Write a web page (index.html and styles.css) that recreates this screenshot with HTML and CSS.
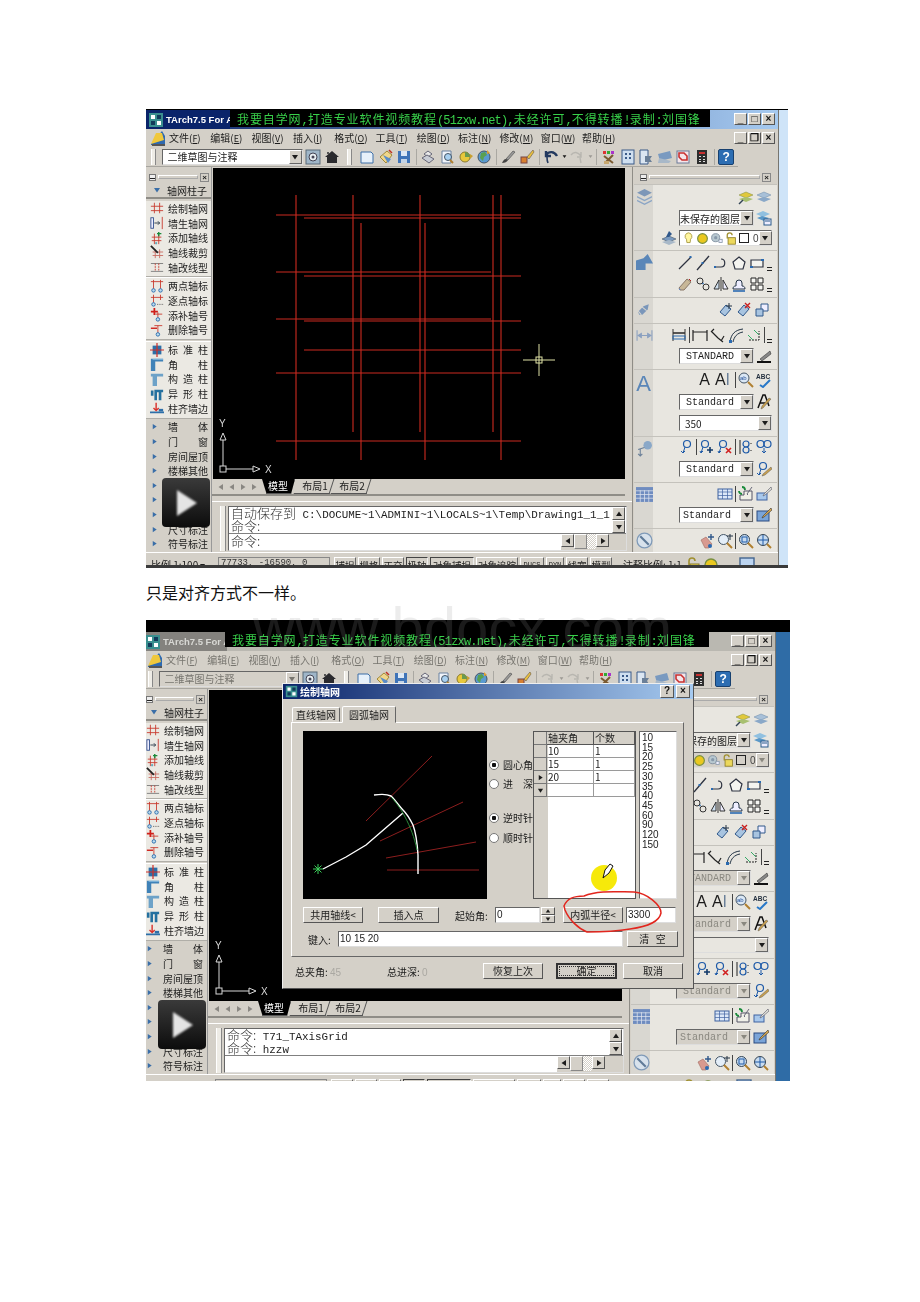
FILE: index.html
```html
<!DOCTYPE html>
<html lang="zh-CN">
<head>
    <meta charset="UTF-8">
    <title>只是对齐方式不一样</title>
    <link rel="stylesheet" href="styles.css">
</head>
<body>
<svg class="sprite" xmlns="http://www.w3.org/2000/svg">
    <symbol id="i-app" viewBox="0 0 16 16"><rect x="1" y="1" width="14" height="14" fill="#3a8f8f"/><path d="M3 3h4v4H3zM9 9h4v4H9z" fill="#fff"/><path d="M9 3h4v4H9zM3 9h4v4H3z" fill="#123a5a"/></symbol>
    <symbol id="i-doc" viewBox="0 0 16 16"><path d="M1 14 12 1l3 5v9H1z" fill="#2f6ab0"/><path d="M1 14 6 3h6l2 7z" fill="#f0c83c"/><path d="M2 14h13v2H2z" fill="#555"/></symbol>
    <symbol id="i-gear" viewBox="0 0 16 16"><rect x="1" y="1" width="14" height="14" fill="#9fb6c9" stroke="#5a6a78"/><circle cx="8" cy="8" r="4" fill="#e8eef2" stroke="#445"/><circle cx="8" cy="8" r="1.5" fill="#445"/></symbol>
    <symbol id="i-house" viewBox="0 0 16 16"><path d="M8 2 15 8h-2v6H3V8H1z" fill="#2a2a2e"/><path d="M3 3h2v2H3z" fill="#555"/></symbol>
    <symbol id="i-new" viewBox="0 0 16 16"><path d="M2 3h10l2 2v9H2z" fill="#e6f0fa" stroke="#3d6fa8"/></symbol>
    <symbol id="i-open" viewBox="0 0 16 16"><path d="M2 8 9 2l5 4-6 8z" fill="#f0d68a" stroke="#a08838"/><path d="M5 6l5 8 3-4z" fill="#5a8cc8"/><path d="M11 1l3 3" stroke="#c03020" stroke-width="1.5"/></symbol>
    <symbol id="i-save" viewBox="0 0 16 16"><rect x="2" y="2" width="12" height="12" fill="#3f74b8"/><rect x="5" y="2" width="6" height="5" fill="#dce8f5"/><rect x="5" y="10" width="6" height="4" fill="#c4d4e6"/></symbol>
    <symbol id="i-print" viewBox="0 0 16 16"><path d="M4 5 8 2l4 3-4 3z" fill="#e8e8e8" stroke="#667"/><path d="M2 9l5-3 7 4-5 4z" fill="#c8ccd4" stroke="#667"/></symbol>
    <symbol id="i-preview" viewBox="0 0 16 16"><path d="M3 2h9v12H3z" fill="#f0f4fa" stroke="#6a82a0"/><circle cx="9" cy="8" r="3.5" fill="#a8d0f0" stroke="#456"/><path d="M11 11l3 3" stroke="#b08030" stroke-width="2"/></symbol>
    <symbol id="i-publish" viewBox="0 0 16 16"><circle cx="7" cy="8" r="5" fill="#e8c83c" stroke="#8a7a30"/><path d="M7 3a5 5 0 0 1 5 5H7z" fill="#6a9a50"/><path d="M12 5l3 2-3 3z" fill="#c8a030"/></symbol>
    <symbol id="i-globe" viewBox="0 0 16 16"><circle cx="8" cy="8" r="6" fill="#5a9ad0" stroke="#456"/><path d="M5 4l4-1 2 3-3 2-1 4-3-3z" fill="#5aa050"/><path d="M11 1l3 3-3 1z" fill="#e0a030"/></symbol>
    <symbol id="i-brush" viewBox="0 0 16 16"><path d="M13 2 6 10l2 1 7-8z" fill="#9a9a9a" stroke="#444" stroke-width=".6"/><path d="M6 10c-2 0-3 2-4 4 3 0 5-1 6-3z" fill="#444"/></symbol>
    <symbol id="i-match" viewBox="0 0 16 16"><rect x="2" y="8" width="6" height="6" fill="#d88030" stroke="#744"/><path d="M14 1 8 8l2 2 5-7z" fill="#e8c040" stroke="#654" stroke-width=".6"/></symbol>
    <symbol id="i-undo" viewBox="0 0 16 16"><path d="M14 7C11 2 6 2 3 6M3 2v5h5" fill="none" stroke="#23395f" stroke-width="2.4"/><path d="M4 8c0 3 0 4 1 6" stroke="#23395f" stroke-width="1.6" fill="none"/></symbol>
    <symbol id="i-redo" viewBox="0 0 16 16"><path d="M2 6c3-4 7-3 10 1M12 3v5H8M11 9l1 5" fill="none" stroke="#b8b6b0" stroke-width="1.4"/></symbol>
    <symbol id="i-tricolor" viewBox="0 0 16 16"><path d="M2 2h3v3H2z" fill="#d33"/><path d="M6 2h3v3H6z" fill="#3a3"/><path d="M10 2h3v3h-3z" fill="#a3c"/><path d="M3 7l9 7M12 6l-8 8" stroke="#7a5a30" stroke-width="2"/><path d="M3 12h5v3H3z" fill="#c8a870"/></symbol>
    <symbol id="i-props" viewBox="0 0 16 16"><rect x="2" y="1" width="12" height="14" fill="#cfdff0" stroke="#3a5a88"/><path d="M5 4h2v2H5zM9 4h2v2H9zM5 8h2v2H5zM9 8h2v2H9z" fill="#3a5a88"/></symbol>
    <symbol id="i-sheet" viewBox="0 0 16 16"><path d="M2 1h8v14H2z" fill="#dbe6f2" stroke="#3a5a88"/><path d="M7 7h7l-2 3 2 3H7z" fill="#6a7f98"/></symbol>
    <symbol id="i-mark" viewBox="0 0 16 16"><path d="M1 5l12-3 2 7-12 3z" fill="#7a9ac0"/><path d="M2 9l12 3-2 2H1z" fill="#a8b8c8"/></symbol>
    <symbol id="i-calc-red" viewBox="0 0 16 16"><rect x="2" y="2" width="12" height="12" fill="#f4e6ea" stroke="#6a7a98"/><path d="M4 4h5l3 3v4H7L4 8z" fill="none" stroke="#c83030" stroke-width="1.6"/></symbol>
    <symbol id="i-calc" viewBox="0 0 16 16"><rect x="3" y="1" width="10" height="14" fill="#2e2e2e"/><rect x="5" y="3" width="6" height="2" fill="#c83030"/><path d="M5 7h2v1H5zM9 7h2v1H9zM5 10h2v1H5zM9 10h2v1H9zM5 12h2v1H5zM9 12h2v1H9z" fill="#ddd"/></symbol>
    <symbol id="i-ax-draw" viewBox="0 0 16 16"><path d="M5 2v12M11 2v12M1 6h14M1 11h14" stroke="#c8382c" fill="none"/></symbol>
    <symbol id="i-ax-wall" viewBox="0 0 16 16"><rect x="1" y="2" width="3" height="12" fill="#eef" stroke="#2d4a8a"/><path d="M5 8h6M9 6l2 2-2 2" stroke="#234" fill="none"/><path d="M14 1v14" stroke="#c8382c"/></symbol>
    <symbol id="i-ax-add" viewBox="0 0 16 16"><path d="M5 3v12M10 3v12M2 7h11M2 11h11" stroke="#c8382c" fill="none"/><path d="M10 1v5M8 3h5" stroke="#1a8a3a" stroke-width="1.6"/><circle cx="7" cy="14" r="1.3" fill="#6ab"/></symbol>
    <symbol id="i-ax-trim" viewBox="0 0 16 16"><path d="M6 5v10M11 5v10M3 8h12M3 12h12" stroke="#c86a60" fill="none"/><path d="M1 1l8 8" stroke="#222" stroke-width="2"/></symbol>
    <symbol id="i-ax-type" viewBox="0 0 16 16"><path d="M1 4h14M1 13h14" stroke="#777" fill="none"/><path d="M6 4v9M10 4v9" stroke="#c8382c" stroke-dasharray="2 1" fill="none"/></symbol>
    <symbol id="i-ax-two" viewBox="0 0 16 16"><path d="M1 3h14" stroke="#c8382c"/><path d="M4 1v10M12 1v10" stroke="#c8382c"/><circle cx="4" cy="13" r="2" fill="#bde" stroke="#26a"/><circle cx="12" cy="13" r="2" fill="#bde" stroke="#26a"/></symbol>
    <symbol id="i-ax-step" viewBox="0 0 16 16"><path d="M1 5h14" stroke="#c8382c"/><path d="M4 2v9M12 2v6" stroke="#c8382c"/><circle cx="4" cy="13" r="2" fill="#bde" stroke="#26a"/><path d="M8 13h7" stroke="#555" stroke-dasharray="1 1"/></symbol>
    <symbol id="i-ax-num" viewBox="0 0 16 16"><path d="M1 4h8M5 0v8" stroke="#d0201a" stroke-width="2"/><path d="M9 5v6M6 7h8" stroke="#c8382c"/><circle cx="9" cy="13" r="2" fill="#bde" stroke="#26a"/></symbol>
    <symbol id="i-ax-del" viewBox="0 0 16 16"><path d="M1 6h7" stroke="#d0201a" stroke-width="1.6"/><path d="M9 3v8M5 3h9" stroke="#c8382c"/><circle cx="9" cy="13" r="2" fill="#bde" stroke="#26a"/></symbol>
    <symbol id="i-col" viewBox="0 0 16 16"><rect x="3" y="3" width="10" height="10" fill="#2d6fa8"/><path d="M8 0v16M0 8h16" stroke="#d0302a" stroke-width="1.4"/></symbol>
    <symbol id="i-col-l" viewBox="0 0 16 16"><path d="M1 2h14v3H6v11H1z" fill="#3f82b8"/><path d="M3 2h12v1H3z" fill="#9ccbea"/></symbol>
    <symbol id="i-col-t" viewBox="0 0 16 16"><path d="M1 2h14v3H8v11H3V5H1z" fill="#6da2c8"/></symbol>
    <symbol id="i-col-x" viewBox="0 0 16 16"><path d="M1 4h3v6H1zM5 3h10v3h-2v9h-3V6H8v9H5z" fill="#24709f"/></symbol>
    <symbol id="i-col-a" viewBox="0 0 16 16"><path d="M0 12h16v2H0z" fill="#2d6fa8"/><path d="M10 9h5v3h-5z" fill="#2d6fa8"/><path d="M7 2v9M4 8l3 3 3-3" stroke="#d8302a" stroke-width="1.6" fill="none"/></symbol>
    <symbol id="i-stack" viewBox="0 0 16 16"><path d="M8 1l7 3.5L8 8 1 4.5z" fill="#7d97b8"/><path d="M1 7.5 8 11l7-3.5V9l-7 3.5L1 9zM1 11l7 3.5L15 11v1.5L8 16l-7-3.5z" fill="#8ba5c5"/></symbol>
    <symbol id="i-draw" viewBox="0 0 16 16"><path d="M0 15V6l7-2 4-4 5 9H9v6z" fill="#5a86b8"/></symbol>
    <symbol id="i-lay-a" viewBox="0 0 16 16"><path d="M8 3l7 3-7 3-7-3z" fill="#e0c83c" stroke="#7c8a40" stroke-width=".5"/><path d="M8 8l7 2-7 3-7-3z" fill="#a8c070"/><path d="M1 15l4-4" stroke="#345" stroke-width="1.5"/></symbol>
    <symbol id="i-lay-b" viewBox="0 0 16 16"><path d="M8 3l7 3-7 3-7-3z" fill="#a8c0d8" stroke="#6a88a8" stroke-width=".5"/><path d="M8 8l7 2-7 3-7-3z" fill="#8aa8c8"/></symbol>
    <symbol id="i-lay-c" viewBox="0 0 16 16"><path d="M7 1l7 3-7 3-7-3z" fill="#90c0e0"/><path d="M6 6l7 2-5 3-7-3z" fill="#5a98c8"/><rect x="8" y="9" width="7" height="6" fill="#eef" stroke="#2a5a8a"/><path d="M9 11h5" stroke="#2a5a8a"/></symbol>
    <symbol id="i-lay-d" viewBox="0 0 16 16"><path d="M8 6l7 3-7 3-7-3z" fill="#7a9ac0" stroke="#345" stroke-width=".5"/><path d="M8 10l7 2-7 3-7-3z" fill="#a8b8c8"/><path d="M5 7l3-6 3 3-3 3z" fill="#30588a"/></symbol>
    <symbol id="i-bulb" viewBox="0 0 16 16"><path d="M8 1a4.5 4.5 0 0 0-2.5 8l.5 4h4l.5-4A4.5 4.5 0 0 0 8 1z" fill="#fff6a0" stroke="#a09030"/></symbol>
    <symbol id="i-sun" viewBox="0 0 16 16"><circle cx="8" cy="8" r="6" fill="#eac820" stroke="#7a9040" stroke-width="1.4"/></symbol>
    <symbol id="i-lockfrz" viewBox="0 0 16 16"><circle cx="7" cy="7" r="5" fill="#b8c8d0" stroke="#789"/><circle cx="7" cy="7" r="2" fill="#89a"/><rect x="11" y="9" width="4" height="4" fill="#eef" stroke="#89a"/></symbol>
    <symbol id="i-lock" viewBox="0 0 16 16"><path d="M4 8V4a3 3 0 0 1 6 0" stroke="#a09030" fill="none" stroke-width="1.6"/><rect x="5" y="7" width="9" height="8" fill="#ecd85c" stroke="#8a7a20"/></symbol>
    <symbol id="i-line" viewBox="0 0 16 16"><path d="M2 14 14 2" stroke="#2d3240" stroke-width="1.3"/><rect x="12.5" y="1" width="2" height="2" fill="#2a6ab0"/></symbol>
    <symbol id="i-xline" viewBox="0 0 16 16"><path d="M2 15 14 1" stroke="#2d3240" stroke-width="1.3"/><rect x="6.5" y="7" width="2" height="2" fill="#2a6ab0"/></symbol>
    <symbol id="i-pline" viewBox="0 0 16 16"><path d="M1 12h7M8 4c5 0 5 8 0 8" stroke="#2d3240" fill="none" stroke-width="1.2"/><rect x="1" y="11" width="2" height="2" fill="#2a6ab0"/></symbol>
    <symbol id="i-poly" viewBox="0 0 16 16"><path d="M8 2l6 5-2 7H4L2 7z" fill="#f4f4f0" stroke="#2d3240" stroke-width="1.2"/></symbol>
    <symbol id="i-rect" viewBox="0 0 16 16"><path d="M2 5h12v7H2z" fill="#f4f4f0" stroke="#2d3240" stroke-width="1.2"/><path d="M12 4h3v2h-3zM1 11h3v2H1z" fill="#2a6ab0"/></symbol>
    <symbol id="i-erase" viewBox="0 0 16 16"><path d="M2 12 10 3l4 3-7 8H3z" fill="#c8b898" stroke="#876"/><path d="M2 12l2 2H2z" fill="#6a88c0"/><path d="M12 3l2 2" stroke="#b02020"/></symbol>
    <symbol id="i-copy" viewBox="0 0 16 16"><circle cx="5" cy="5" r="3" fill="none" stroke="#333"/><circle cx="11" cy="11" r="3" fill="none" stroke="#333"/><path d="M7 8l2-1" stroke="#2a6ab0"/></symbol>
    <symbol id="i-mirror" viewBox="0 0 16 16"><path d="M1 13 6 4v9z" fill="#cfe0ef" stroke="#333"/><path d="M15 13 10 4v9z" fill="#eef" stroke="#333"/><path d="M8 1v14" stroke="#333"/></symbol>
    <symbol id="i-offset" viewBox="0 0 16 16"><path d="M2 13c0-3 2-3 3-3V7a3 3 0 0 1 6 0v3c2 0 3 1 3 3z" fill="#eef" stroke="#234"/><path d="M2 15h12" stroke="#2a6ab0" stroke-width="1.6"/></symbol>
    <symbol id="i-array" viewBox="0 0 16 16"><path d="M2 2h5v5H2zM9 2h5v5H9zM2 9h5v5H2zM9 9h5v5H9z" fill="#f6f6f2" stroke="#222"/></symbol>
    <symbol id="i-blk-a" viewBox="0 0 16 16"><path d="M2 10l6-7 5 4-6 7z" fill="#a8c4e0" stroke="#30588a"/><path d="M11 1v6M8 4h6" stroke="#234"/></symbol>
    <symbol id="i-blk-b" viewBox="0 0 16 16"><path d="M2 10l6-7 5 4-6 7z" fill="#a8c4e0" stroke="#30588a"/><path d="M9 1l5 5M14 1 9 6" stroke="#c82020" stroke-width="1.4"/></symbol>
    <symbol id="i-blk-c" viewBox="0 0 16 16"><path d="M7 2h7v7H7z" fill="#eef" stroke="#30588a"/><path d="M2 7h7v7H2z" fill="#a8c4e0" stroke="#30588a"/></symbol>
    <symbol id="i-pipe" viewBox="0 0 16 16"><path d="M2 10 7 5l5-2-1 5-5 5H3z" fill="#7a96ba"/><path d="M1 8l4 5M5 5l5 4" stroke="#d8d6d0"/></symbol>
    <symbol id="i-dim" viewBox="0 0 16 16"><path d="M2 8h12M2 8l3-2v4zM14 8l-3-2v4z" fill="#8aa0c0" stroke="#8aa0c0"/><path d="M1 3v10M15 3v10" stroke="#8aa0c0"/></symbol>
    <symbol id="i-dim-a" viewBox="0 0 16 16"><path d="M2 2v12M14 2v12" stroke="#333"/><path d="M2 6h12" stroke="#333" stroke-width="1.6"/><rect x="2" y="9" width="12" height="3" fill="none" stroke="#2a6ab0"/></symbol>
    <symbol id="i-dim-b" viewBox="0 0 16 16"><path d="M1 3v11M15 3v11M1 5h14" stroke="#222" stroke-width="1.2" fill="none"/></symbol>
    <symbol id="i-dim-c" viewBox="0 0 16 16"><path d="M2 5l6 6M4 2 1 5M14 9l-3 5M8 11l5 4" stroke="#222" stroke-width="1.2" fill="none"/></symbol>
    <symbol id="i-dim-d" viewBox="0 0 16 16"><path d="M2 15C3 7 7 3 15 2M5 15C6 10 9 6 15 5" stroke="#234" fill="none"/><rect x="1" y="13" width="3" height="3" fill="#2a6ab0"/></symbol>
    <symbol id="i-dim-e" viewBox="0 0 16 16"><path d="M3 13h10V4" stroke="#222" stroke-dasharray="2 1" fill="none"/><path d="M2 8l5 5M8 3l5 5" stroke="#3a6" fill="none"/></symbol>
    <symbol id="i-dim-st" viewBox="0 0 16 16"><path d="M1 14h14" stroke="#111" stroke-width="2"/><path d="M4 11l10-8 1 3-9 7z" fill="#888" stroke="#222" stroke-width=".5"/></symbol>
    <symbol id="i-find" viewBox="0 0 16 16"><circle cx="6" cy="6" r="5" fill="#dbe8f5" stroke="#456"/><text x="2" y="8" font-size="6" fill="#24509a" font-family="Liberation Sans">ab</text><path d="M10 10l5 5" stroke="#b08030" stroke-width="2"/></symbol>
    <symbol id="i-abc" viewBox="0 0 16 16"><text x="0" y="7" font-size="6.5" font-weight="700" fill="#24303f" font-family="Liberation Sans">ABC</text><path d="M4 13l3 2 7-7" stroke="#2878c8" stroke-width="2" fill="none"/></symbol>
    <symbol id="i-a-pen" viewBox="0 0 16 16"><path d="M2 14 7 1h2l4 11M4 9h7" stroke="#111" stroke-width="1.5" fill="none"/><path d="M15 5 7 14l-2 1 1-3 7-8z" fill="#c8a050" stroke="#444" stroke-width=".4"/></symbol>
    <symbol id="i-lead" viewBox="0 0 16 16"><circle cx="11" cy="5" r="4" fill="#8aa8c8"/><path d="M8 7 2 9M4 8v7M2 13l2 2 2-2" stroke="#6a7f98" fill="none"/></symbol>
    <symbol id="i-ml" viewBox="0 0 16 16"><circle cx="9" cy="5" r="3.5" fill="none" stroke="#1e5aa8" stroke-width="1.2"/><path d="M7 8 5 14M3 12l2 2 2-2" stroke="#1e5aa8" fill="none"/></symbol>
    <symbol id="i-ml-add" viewBox="0 0 16 16"><circle cx="6" cy="5" r="3.5" fill="none" stroke="#1e5aa8" stroke-width="1.2"/><path d="M4 8 2 14M1 12l1 2 2-2" stroke="#1e5aa8" fill="none"/><path d="M11 8v6M8 11h6" stroke="#123a6a" stroke-width="1.6"/></symbol>
    <symbol id="i-ml-del" viewBox="0 0 16 16"><circle cx="6" cy="5" r="3.5" fill="none" stroke="#1e5aa8" stroke-width="1.2"/><path d="M4 8 2 14M1 12l1 2 2-2" stroke="#1e5aa8" fill="none"/><path d="M9 9l5 5M14 9l-5 5" stroke="#d02020" stroke-width="1.6"/></symbol>
    <symbol id="i-ml-align" viewBox="0 0 16 16"><path d="M2 1v14" stroke="#222"/><circle cx="8" cy="5" r="3" fill="none" stroke="#1e5aa8" stroke-width="1.2"/><circle cx="8" cy="11" r="3" fill="none" stroke="#1e5aa8" stroke-width="1.2"/><path d="M13 4v1M13 11v1" stroke="#222"/></symbol>
    <symbol id="i-ml-coll" viewBox="0 0 16 16"><circle cx="4.5" cy="5" r="3.5" fill="none" stroke="#1e5aa8" stroke-width="1.2"/><circle cx="11.5" cy="5" r="3.5" fill="none" stroke="#1e5aa8" stroke-width="1.2"/><path d="M8 9v5M6 12l2 2 2-2" stroke="#1e5aa8" fill="none"/></symbol>
    <symbol id="i-ml-st" viewBox="0 0 16 16"><circle cx="7" cy="5" r="3.5" fill="none" stroke="#1e5aa8" stroke-width="1.2"/><path d="M5 8 3 14M1 12l2 2 2-2" stroke="#1e5aa8" fill="none"/><path d="M15 6 7 13l-1 2 3-1 7-6z" fill="#c8a050" stroke="#444" stroke-width=".4"/></symbol>
    <symbol id="i-tbl-big" viewBox="0 0 16 16"><path d="M0 1h16v14H0z" fill="#6f8cc0"/><path d="M0 4.500h16M0 8h16M0 11.500h16M4 4v11M8 4v11M12 4v11" stroke="#dfe4ee" stroke-width=".7"/></symbol>
    <symbol id="i-tbl" viewBox="0 0 16 16"><rect x="1" y="3" width="14" height="10" fill="#dce8f8" stroke="#3f62a0"/><path d="M1 6h14M1 9.500h14M5.500 3v10M10.500 3v10" stroke="#3f62a0" stroke-width=".7"/></symbol>
    <symbol id="i-tbl-sync" viewBox="0 0 16 16"><path d="M6 5h8v9H2V9h4z" fill="#f0f0e8" stroke="#556"/><path d="M4 1a3 3 0 0 1 3 3M4 8A3 3 0 0 1 1 5" stroke="#1a8a3a" stroke-width="1.8" fill="none"/><path d="M14 1 9 8l1 1" stroke="#667" fill="none"/></symbol>
    <symbol id="i-tbl-ed" viewBox="0 0 16 16"><rect x="1" y="7" width="10" height="7" fill="#a8c8ec" stroke="#3f62a0"/><path d="M15 1 8 8l-1 2 2-1 7-6z" fill="#dfdfd8" stroke="#556" stroke-width=".6"/></symbol>
    <symbol id="i-tbl-st" viewBox="0 0 16 16"><rect x="1" y="4" width="12" height="10" fill="#7aa4d8" stroke="#2a4a80"/><path d="M15 1 7 9l-1 2 2-1 8-7z" fill="#d8a850" stroke="#333" stroke-width=".6"/></symbol>
    <symbol id="i-compass" viewBox="0 0 16 16"><circle cx="8" cy="8" r="7" fill="#d8e2ec" stroke="#7f9ab8" stroke-width="1.2"/><path d="M4 4l8 8" stroke="#5f7a98" stroke-width="2"/></symbol>
    <symbol id="i-pan" viewBox="0 0 16 16"><path d="M2 7l5-3 6 7-3 4H6z" fill="#d89a90" stroke="#a06a60" stroke-width=".6"/><path d="M12 1v6M9 4h6" stroke="#30588a" stroke-width="1.4"/><circle cx="11" cy="13" r="2" fill="#2a6ab0"/></symbol>
    <symbol id="i-zrt" viewBox="0 0 16 16"><circle cx="6.500" cy="6.500" r="5" fill="#e4eef8" stroke="#456"/><path d="M10 10l5 5" stroke="#b08030" stroke-width="2"/><path d="M13 1v6M10 3h6" stroke="#234"/></symbol>
    <symbol id="i-zw" viewBox="0 0 16 16"><circle cx="6.500" cy="6.500" r="5" fill="#c8dcf0" stroke="#345"/><rect x="4" y="4" width="5" height="5" fill="none" stroke="#1e5aa8"/><path d="M10 10l5 5" stroke="#b08030" stroke-width="2"/></symbol>
    <symbol id="i-ze" viewBox="0 0 16 16"><circle cx="7" cy="7" r="5.500" fill="#c8dcf0" stroke="#345"/><path d="M7 2v10M2 7h10" stroke="#1e5aa8"/><path d="M11 11l4 4" stroke="#b08030" stroke-width="2"/></symbol>
    <symbol id="i-tray" viewBox="0 0 16 16"><rect x="1" y="1" width="14" height="14" fill="#bcd4f0" stroke="#45668f" stroke-width="1.4"/></symbol>
    <symbol id="i-tri-up" viewBox="0 0 8 8"><path d="M4 1.500 7 6H1z" fill="currentColor"/></symbol>
    <symbol id="i-tri-dn" viewBox="0 0 8 8"><path d="M4 6.500 1 2h6z" fill="currentColor"/></symbol>
    <symbol id="i-tri-lf" viewBox="0 0 8 8"><path d="M1.500 4 6 1v6z" fill="currentColor"/></symbol>
    <symbol id="i-tri-rt" viewBox="0 0 8 8"><path d="M6.500 4 2 1v6z" fill="currentColor"/></symbol>
</svg>

<main class="page">
    <section class="shot shot-a">
        <div class="window">
            <div class="titlebar">
                <div class="app-title"><svg class="ic"><use href="#i-app"/></svg>TArch7.5 For A</div>
                <div class="banner">我要自学网<i>,</i>打造专业软件视频教程<i>(51zxw.net),</i>未经许可<i>,</i>不得转播<i>!</i>录制<i>:</i>刘国锋</div>
                <div class="win-btns"><span class="wb">_</span><span class="wb">□</span><span class="wb">×</span></div>
            </div>
            <div class="menubar">
                <svg class="ic menu-ic"><use href="#i-doc"/></svg>
                <span class="menu">文件(<u>F</u>)</span><span class="menu">编辑(<u>E</u>)</span><span class="menu">视图(<u>V</u>)</span><span class="menu">插入(<u>I</u>)</span><span class="menu">格式(<u>O</u>)</span><span class="menu">工具(<u>T</u>)</span><span class="menu">绘图(<u>D</u>)</span><span class="menu">标注(<u>N</u>)</span><span class="menu">修改(<u>M</u>)</span><span class="menu">窗口(<u>W</u>)</span><span class="menu">帮助(<u>H</u>)</span>
                <div class="win-btns"><span class="wb">_</span><span class="wb">❐</span><span class="wb">×</span></div>
            </div>
            <div class="toolbar">
                <span class="grip"></span>
                <div class="combo combo-work"><span class="combo-text">二维草图与注释</span><span class="drop"><svg><use href="#i-tri-dn"/></svg></span></div>
                <svg class="ic"><use href="#i-gear"/></svg><svg class="ic"><use href="#i-house"/></svg>
                <span class="grip grip-mid"></span>
                <svg class="ic"><use href="#i-new"/></svg><svg class="ic"><use href="#i-open"/></svg><svg class="ic"><use href="#i-save"/></svg><span class="sep"></span>
                <svg class="ic"><use href="#i-print"/></svg><svg class="ic"><use href="#i-preview"/></svg><svg class="ic"><use href="#i-publish"/></svg><svg class="ic"><use href="#i-globe"/></svg><span class="sep"></span>
                <svg class="ic"><use href="#i-brush"/></svg><svg class="ic"><use href="#i-match"/></svg><span class="sep"></span>
                <svg class="ic"><use href="#i-undo"/></svg><span class="mini"><svg><use href="#i-tri-dn"/></svg></span><svg class="ic"><use href="#i-redo"/></svg><span class="mini off"><svg><use href="#i-tri-dn"/></svg></span><span class="sep"></span>
                <svg class="ic"><use href="#i-tricolor"/></svg><svg class="ic"><use href="#i-props"/></svg><svg class="ic"><use href="#i-sheet"/></svg><svg class="ic"><use href="#i-mark"/></svg><svg class="ic"><use href="#i-calc-red"/></svg><svg class="ic"><use href="#i-calc"/></svg><span class="sep"></span>
                <span class="help">?</span>
            </div>
            <div class="workarea">
                <aside class="left-panel">
                    <div class="pal-head"><span class="pal-min"></span><span class="pal-line"></span><span class="pal-x">×</span></div>
                    <div class="tool-head"><svg class="arr"><use href="#i-tri-dn"/></svg><span>轴网柱子</span></div>
                    <div class="tool-group">
                        <div class="tool"><svg class="ic"><use href="#i-ax-draw"/></svg><span>绘制轴网</span></div>
                        <div class="tool"><svg class="ic"><use href="#i-ax-wall"/></svg><span>墙生轴网</span></div>
                        <div class="tool"><svg class="ic"><use href="#i-ax-add"/></svg><span>添加轴线</span></div>
                        <div class="tool"><svg class="ic"><use href="#i-ax-trim"/></svg><span>轴线裁剪</span></div>
                        <div class="tool"><svg class="ic"><use href="#i-ax-type"/></svg><span>轴改线型</span></div>
                    </div>
                    <div class="tool-group">
                        <div class="tool"><svg class="ic"><use href="#i-ax-two"/></svg><span>两点轴标</span></div>
                        <div class="tool"><svg class="ic"><use href="#i-ax-step"/></svg><span>逐点轴标</span></div>
                        <div class="tool"><svg class="ic"><use href="#i-ax-num"/></svg><span>添补轴号</span></div>
                        <div class="tool"><svg class="ic"><use href="#i-ax-del"/></svg><span>删除轴号</span></div>
                    </div>
                    <div class="tool-group">
                        <div class="tool"><svg class="ic"><use href="#i-col"/></svg><span>标准柱</span></div>
                        <div class="tool"><svg class="ic"><use href="#i-col-l"/></svg><span>角柱</span></div>
                        <div class="tool"><svg class="ic"><use href="#i-col-t"/></svg><span>构造柱</span></div>
                        <div class="tool"><svg class="ic"><use href="#i-col-x"/></svg><span>异形柱</span></div>
                        <div class="tool"><svg class="ic"><use href="#i-col-a"/></svg><span>柱齐墙边</span></div>
                    </div>
                    <div class="cats">
                        <div class="cat"><svg class="arr"><use href="#i-tri-rt"/></svg><span>墙体</span></div>
                        <div class="cat"><svg class="arr"><use href="#i-tri-rt"/></svg><span>门窗</span></div>
                        <div class="cat"><svg class="arr"><use href="#i-tri-rt"/></svg><span>房间屋顶</span></div>
                        <div class="cat"><svg class="arr"><use href="#i-tri-rt"/></svg><span>楼梯其他</span></div>
                        <div class="cat"><svg class="arr"><use href="#i-tri-rt"/></svg><span>立面</span></div>
                        <div class="cat"><svg class="arr"><use href="#i-tri-rt"/></svg><span>剖面</span></div>
                        <div class="cat"><svg class="arr"><use href="#i-tri-rt"/></svg><span>文字表格</span></div>
                        <div class="cat"><svg class="arr"><use href="#i-tri-rt"/></svg><span>尺寸标注</span></div>
                        <div class="cat"><svg class="arr"><use href="#i-tri-rt"/></svg><span>符号标注</span></div>
                    </div>
                </aside>
                <div class="center">
                    <div class="canvas">
                        <svg class="drawing" viewBox="0 0 411 312">
                            <g class="reds">
                                <path d="M83 27V292M140 27V264M148 55V292M207 27V264M212 55V292M280 27V264M288 27V292"/>
                                <path d="M63 47H308M91 50H308M63 104H278M91 108H308M63 151H278M91 153H308M91 182H308M63 205H308M63 273H308"/>
                            </g>
                            <g class="cross"><path d="M310 192H342M326 176V208"/><rect x="323" y="189" width="6" height="6"/></g>
                            <g class="ucs"><rect x="7" y="298" width="6" height="6"/><path d="M10 298V272M13 301H40M10 265l-3 7h6zM47 301l-7-3v6z"/><text x="6" y="259">Y</text><text x="52" y="305">X</text></g>
                        </svg>
                    </div>
                    <div class="tabs">
                        <span class="nav"><svg><use href="#i-tri-lf"/></svg></span><span class="nav"><svg><use href="#i-tri-lf"/></svg></span><span class="nav"><svg><use href="#i-tri-rt"/></svg></span><span class="nav"><svg><use href="#i-tri-rt"/></svg></span>
                        <span class="tab tab-on"><span>模型</span></span><span class="tab"><span>布局1</span></span><span class="tab"><span>布局2</span></span>
                    </div>
                    <div class="splitter"></div>
                    <div class="command">
                        <span class="grip grip-cmd"></span>
                        <div class="cmd-box">
                            <div class="cmd-log">
                                <div class="cmd-text"><div><span class="cn-big">自动保存到</span> C:\DOCUME~1\ADMINI~1\LOCALS~1\Temp\Drawing1_1_1</div><div><span class="cn-big">命令:</span></div></div>
                                <div class="vscroll"><span class="sb"><svg><use href="#i-tri-up"/></svg></span><span class="sb"><svg><use href="#i-tri-dn"/></svg></span></div>
                            </div>
                            <div class="cmd-input">
                                <div class="cmd-line"><span class="cn-big">命令:</span></div>
                                <div class="hscroll"><span class="sb"><svg><use href="#i-tri-lf"/></svg></span><span class="thumb"></span><span class="track"></span><span class="sb"><svg><use href="#i-tri-rt"/></svg></span></div>
                            </div>
                        </div>
                    </div>
                </div>
                <aside class="right-panel">
                    <div class="pal-head pal-head-r"><span class="pal-min"></span><span class="pal-line"></span><span class="pal-x">×</span></div>
                    <div class="sec sec-1"><div class="strip"><svg class="ic ic-big"><use href="#i-stack"/></svg></div><div class="rows">
                        <div class="irow"><svg class="ic"><use href="#i-lay-a"/></svg><svg class="ic"><use href="#i-lay-b"/></svg></div>
                        <div class="irow"><div class="combo combo-m"><span class="combo-text">未保存的图层</span><span class="drop"><svg><use href="#i-tri-dn"/></svg></span></div><svg class="ic"><use href="#i-lay-c"/></svg></div>
                        <div class="irow"><svg class="ic"><use href="#i-lay-d"/></svg><div class="combo combo-l"><span class="layer-ics"><svg class="ic"><use href="#i-bulb"/></svg><svg class="ic"><use href="#i-sun"/></svg><svg class="ic"><use href="#i-lockfrz"/></svg><svg class="ic"><use href="#i-lock"/></svg><i class="swatch"></i>0</span><span class="drop"><svg><use href="#i-tri-dn"/></svg></span></div></div>
                    </div></div>
                    <div class="sec sec-2"><div class="strip"><svg class="ic ic-big"><use href="#i-draw"/></svg></div><div class="rows">
                        <div class="irow"><svg class="ic"><use href="#i-line"/></svg><svg class="ic"><use href="#i-xline"/></svg><svg class="ic"><use href="#i-pline"/></svg><svg class="ic"><use href="#i-poly"/></svg><svg class="ic"><use href="#i-rect"/></svg><span class="fly"></span></div>
                        <div class="irow"><svg class="ic"><use href="#i-erase"/></svg><svg class="ic"><use href="#i-copy"/></svg><svg class="ic"><use href="#i-mirror"/></svg><svg class="ic"><use href="#i-offset"/></svg><svg class="ic"><use href="#i-array"/></svg><span class="fly"></span></div>
                    </div></div>
                    <div class="sec sec-3"><div class="strip"><svg class="ic ic-big"><use href="#i-pipe"/></svg></div><div class="rows">
                        <div class="irow"><svg class="ic"><use href="#i-blk-a"/></svg><svg class="ic"><use href="#i-blk-b"/></svg><svg class="ic"><use href="#i-blk-c"/></svg></div>
                    </div></div>
                    <div class="sec sec-4"><div class="strip"><svg class="ic ic-big"><use href="#i-dim"/></svg></div><div class="rows">
                        <div class="irow"><svg class="ic"><use href="#i-dim-a"/></svg><span class="vbar"></span><svg class="ic"><use href="#i-dim-b"/></svg><svg class="ic"><use href="#i-dim-c"/></svg><svg class="ic"><use href="#i-dim-d"/></svg><svg class="ic"><use href="#i-dim-e"/></svg><span class="vbar"></span><span class="fly"></span></div>
                        <div class="irow"><div class="combo combo-m"><span class="combo-text mono">STANDARD</span><span class="drop"><svg><use href="#i-tri-dn"/></svg></span></div><svg class="ic"><use href="#i-dim-st"/></svg></div>
                    </div></div>
                    <div class="sec sec-5"><div class="strip"><span class="big-a">A</span></div><div class="rows">
                        <div class="irow"><span class="txt-a">A</span><span class="txt-a">A<b>I</b></span><span class="vbar"></span><svg class="ic"><use href="#i-find"/></svg><svg class="ic"><use href="#i-abc"/></svg></div>
                        <div class="irow"><div class="combo combo-m"><span class="combo-text mono">Standard</span><span class="drop"><svg><use href="#i-tri-dn"/></svg></span></div><svg class="ic"><use href="#i-a-pen"/></svg></div>
                        <div class="irow"><div class="combo combo-l"><span class="combo-text">350</span><span class="drop"><svg><use href="#i-tri-dn"/></svg></span></div></div>
                    </div></div>
                    <div class="sec sec-6"><div class="strip"><svg class="ic ic-big"><use href="#i-lead"/></svg></div><div class="rows">
                        <div class="irow"><svg class="ic"><use href="#i-ml"/></svg><span class="vbar"></span><svg class="ic"><use href="#i-ml-add"/></svg><svg class="ic"><use href="#i-ml-del"/></svg><span class="vbar"></span><svg class="ic"><use href="#i-ml-align"/></svg><svg class="ic"><use href="#i-ml-coll"/></svg></div>
                        <div class="irow"><div class="combo combo-m"><span class="combo-text mono">Standard</span><span class="drop"><svg><use href="#i-tri-dn"/></svg></span></div><svg class="ic"><use href="#i-ml-st"/></svg></div>
                    </div></div>
                    <div class="sec sec-7"><div class="strip"><svg class="ic ic-big"><use href="#i-tbl-big"/></svg></div><div class="rows">
                        <div class="irow"><svg class="ic"><use href="#i-tbl"/></svg><span class="vbar"></span><svg class="ic"><use href="#i-tbl-sync"/></svg><svg class="ic"><use href="#i-tbl-ed"/></svg></div>
                        <div class="irow"><div class="combo combo-m"><span class="combo-text mono left">Standard</span><span class="drop"><svg><use href="#i-tri-dn"/></svg></span></div><svg class="ic"><use href="#i-tbl-st"/></svg></div>
                    </div></div>
                    <div class="sec sec-8"><div class="strip"><svg class="ic ic-big"><use href="#i-compass"/></svg></div><div class="rows">
                        <div class="irow"><svg class="ic"><use href="#i-pan"/></svg><svg class="ic"><use href="#i-zrt"/></svg><span class="vbar"></span><svg class="ic"><use href="#i-zw"/></svg><svg class="ic"><use href="#i-ze"/></svg></div>
                    </div></div>
                </aside>
            </div>
            <div class="statusbar">
                <span class="st-scale">比例 1:100 ▾</span>
                <span class="st-coord">77733, -16590, 0</span>
                <span class="st w22">捕捉</span><span class="st w22">栅格</span><span class="st w22">正交</span><span class="st w22 down">极轴</span><span class="st w44 down">对象捕捉</span><span class="st w42">对象追踪</span><span class="st w24 small">DUCS</span><span class="st w18 small">DYN</span><span class="st w22">线宽</span><span class="st w22">模型</span>
                <span class="st-ann">注释比例: 1:1 ▾</span>
                <svg class="ic"><use href="#i-lock"/></svg><svg class="ic"><use href="#i-sun"/></svg>
                <svg class="ic st-tray"><use href="#i-tray"/></svg>
            </div>
        </div>
        <div class="play"><span class="play-tri"></span></div>
    </section>

    <p class="caption">只是对齐方式不一样。</p>

    <section class="shot shot-b">
        <div class="window">
            <div class="titlebar">
                <div class="app-title"><svg class="ic"><use href="#i-app"/></svg>TArch7.5 For A</div>
                <div class="banner">我要自学网<i>,</i>打造专业软件视频教程<i>(51zxw.net),</i>未经许可<i>,</i>不得转播<i>!</i>录制<i>:</i>刘国锋</div>
                <div class="win-btns"><span class="wb">_</span><span class="wb">□</span><span class="wb">×</span></div>
            </div>
            <div class="menubar">
                <svg class="ic menu-ic"><use href="#i-doc"/></svg>
                <span class="menu">文件(<u>F</u>)</span><span class="menu">编辑(<u>E</u>)</span><span class="menu">视图(<u>V</u>)</span><span class="menu">插入(<u>I</u>)</span><span class="menu">格式(<u>O</u>)</span><span class="menu">工具(<u>T</u>)</span><span class="menu">绘图(<u>D</u>)</span><span class="menu">标注(<u>N</u>)</span><span class="menu">修改(<u>M</u>)</span><span class="menu">窗口(<u>W</u>)</span><span class="menu">帮助(<u>H</u>)</span>
                <div class="win-btns"><span class="wb">_</span><span class="wb">❐</span><span class="wb">×</span></div>
            </div>
            <div class="toolbar">
                <span class="grip"></span>
                <div class="combo combo-work"><span class="combo-text">二维草图与注释</span><span class="drop"><svg><use href="#i-tri-dn"/></svg></span></div>
                <svg class="ic"><use href="#i-gear"/></svg><svg class="ic"><use href="#i-house"/></svg>
                <span class="grip grip-mid"></span>
                <svg class="ic"><use href="#i-new"/></svg><svg class="ic"><use href="#i-open"/></svg><svg class="ic"><use href="#i-save"/></svg><span class="sep"></span>
                <svg class="ic"><use href="#i-print"/></svg><svg class="ic"><use href="#i-preview"/></svg><svg class="ic"><use href="#i-publish"/></svg><svg class="ic"><use href="#i-globe"/></svg><span class="sep"></span>
                <svg class="ic"><use href="#i-brush"/></svg><svg class="ic"><use href="#i-match"/></svg><span class="sep"></span>
                <svg class="ic"><use href="#i-redo"/></svg><span class="mini off"><svg><use href="#i-tri-dn"/></svg></span><svg class="ic"><use href="#i-redo"/></svg><span class="mini off"><svg><use href="#i-tri-dn"/></svg></span><span class="sep"></span>
                <svg class="ic"><use href="#i-tricolor"/></svg><svg class="ic"><use href="#i-props"/></svg><svg class="ic"><use href="#i-sheet"/></svg><svg class="ic"><use href="#i-mark"/></svg><svg class="ic"><use href="#i-calc-red"/></svg><svg class="ic"><use href="#i-calc"/></svg><span class="sep"></span>
                <span class="help">?</span>
            </div>
            <div class="workarea">
                <aside class="left-panel">
                    <div class="pal-head"><span class="pal-min"></span><span class="pal-line"></span><span class="pal-x">×</span></div>
                    <div class="tool-head"><svg class="arr"><use href="#i-tri-dn"/></svg><span>轴网柱子</span></div>
                    <div class="tool-group">
                        <div class="tool"><svg class="ic"><use href="#i-ax-draw"/></svg><span>绘制轴网</span></div>
                        <div class="tool"><svg class="ic"><use href="#i-ax-wall"/></svg><span>墙生轴网</span></div>
                        <div class="tool"><svg class="ic"><use href="#i-ax-add"/></svg><span>添加轴线</span></div>
                        <div class="tool"><svg class="ic"><use href="#i-ax-trim"/></svg><span>轴线裁剪</span></div>
                        <div class="tool"><svg class="ic"><use href="#i-ax-type"/></svg><span>轴改线型</span></div>
                    </div>
                    <div class="tool-group">
                        <div class="tool"><svg class="ic"><use href="#i-ax-two"/></svg><span>两点轴标</span></div>
                        <div class="tool"><svg class="ic"><use href="#i-ax-step"/></svg><span>逐点轴标</span></div>
                        <div class="tool"><svg class="ic"><use href="#i-ax-num"/></svg><span>添补轴号</span></div>
                        <div class="tool"><svg class="ic"><use href="#i-ax-del"/></svg><span>删除轴号</span></div>
                    </div>
                    <div class="tool-group">
                        <div class="tool"><svg class="ic"><use href="#i-col"/></svg><span>标准柱</span></div>
                        <div class="tool"><svg class="ic"><use href="#i-col-l"/></svg><span>角柱</span></div>
                        <div class="tool"><svg class="ic"><use href="#i-col-t"/></svg><span>构造柱</span></div>
                        <div class="tool"><svg class="ic"><use href="#i-col-x"/></svg><span>异形柱</span></div>
                        <div class="tool"><svg class="ic"><use href="#i-col-a"/></svg><span>柱齐墙边</span></div>
                    </div>
                    <div class="cats">
                        <div class="cat"><svg class="arr"><use href="#i-tri-rt"/></svg><span>墙体</span></div>
                        <div class="cat"><svg class="arr"><use href="#i-tri-rt"/></svg><span>门窗</span></div>
                        <div class="cat"><svg class="arr"><use href="#i-tri-rt"/></svg><span>房间屋顶</span></div>
                        <div class="cat"><svg class="arr"><use href="#i-tri-rt"/></svg><span>楼梯其他</span></div>
                        <div class="cat"><svg class="arr"><use href="#i-tri-rt"/></svg><span>立面</span></div>
                        <div class="cat"><svg class="arr"><use href="#i-tri-rt"/></svg><span>剖面</span></div>
                        <div class="cat"><svg class="arr"><use href="#i-tri-rt"/></svg><span>文字表格</span></div>
                        <div class="cat"><svg class="arr"><use href="#i-tri-rt"/></svg><span>尺寸标注</span></div>
                        <div class="cat"><svg class="arr"><use href="#i-tri-rt"/></svg><span>符号标注</span></div>
                    </div>
                </aside>
                <div class="center">
                    <div class="canvas">
                        <svg class="drawing" viewBox="0 0 411 312">
                            <g class="ucs"><rect x="7" y="298" width="6" height="6"/><path d="M10 298V272M13 301H40M10 265l-3 7h6zM47 301l-7-3v6z"/><text x="6" y="259">Y</text><text x="52" y="305">X</text></g>
                        </svg>
                    </div>
                    <div class="tabs">
                        <span class="nav"><svg><use href="#i-tri-lf"/></svg></span><span class="nav"><svg><use href="#i-tri-lf"/></svg></span><span class="nav"><svg><use href="#i-tri-rt"/></svg></span><span class="nav"><svg><use href="#i-tri-rt"/></svg></span>
                        <span class="tab tab-on"><span>模型</span></span><span class="tab"><span>布局1</span></span><span class="tab"><span>布局2</span></span>
                    </div>
                    <div class="splitter"></div>
                    <div class="command">
                        <span class="grip grip-cmd"></span>
                        <div class="cmd-box">
                            <div class="cmd-log">
                                <div class="cmd-text"><div><span class="cn-big">命令:</span> T71_TAxisGrid</div><div><span class="cn-big">命令:</span> hzzw</div></div>
                                <div class="vscroll"><span class="sb"><svg><use href="#i-tri-up"/></svg></span><span class="sb"><svg><use href="#i-tri-dn"/></svg></span></div>
                            </div>
                            <div class="cmd-input">
                                <div class="cmd-line"></div>
                                <div class="hscroll"><span class="sb"><svg><use href="#i-tri-lf"/></svg></span><span class="thumb"></span><span class="track"></span><span class="sb"><svg><use href="#i-tri-rt"/></svg></span></div>
                            </div>
                        </div>
                    </div>
                </div>
                <aside class="right-panel is-off">
                    <div class="pal-head pal-head-r"><span class="pal-min"></span><span class="pal-line"></span><span class="pal-x">×</span></div>
                    <div class="sec sec-1"><div class="strip"><svg class="ic ic-big"><use href="#i-stack"/></svg></div><div class="rows">
                        <div class="irow"><svg class="ic"><use href="#i-lay-a"/></svg><svg class="ic"><use href="#i-lay-b"/></svg></div>
                        <div class="irow"><div class="combo combo-m combo-on"><span class="combo-text">未保存的图层</span><span class="drop"><svg><use href="#i-tri-dn"/></svg></span></div><svg class="ic"><use href="#i-lay-c"/></svg></div>
                        <div class="irow"><svg class="ic"><use href="#i-lay-d"/></svg><div class="combo combo-l"><span class="layer-ics"><svg class="ic"><use href="#i-bulb"/></svg><svg class="ic"><use href="#i-sun"/></svg><svg class="ic"><use href="#i-lockfrz"/></svg><svg class="ic"><use href="#i-lock"/></svg><i class="swatch"></i>0</span><span class="drop"><svg><use href="#i-tri-dn"/></svg></span></div></div>
                    </div></div>
                    <div class="sec sec-2"><div class="strip"><svg class="ic ic-big"><use href="#i-draw"/></svg></div><div class="rows">
                        <div class="irow"><svg class="ic"><use href="#i-line"/></svg><svg class="ic"><use href="#i-xline"/></svg><svg class="ic"><use href="#i-pline"/></svg><svg class="ic"><use href="#i-poly"/></svg><svg class="ic"><use href="#i-rect"/></svg><span class="fly"></span></div>
                        <div class="irow"><svg class="ic"><use href="#i-erase"/></svg><svg class="ic"><use href="#i-copy"/></svg><svg class="ic"><use href="#i-mirror"/></svg><svg class="ic"><use href="#i-offset"/></svg><svg class="ic"><use href="#i-array"/></svg><span class="fly"></span></div>
                    </div></div>
                    <div class="sec sec-3"><div class="strip"><svg class="ic ic-big"><use href="#i-pipe"/></svg></div><div class="rows">
                        <div class="irow"><svg class="ic"><use href="#i-blk-a"/></svg><svg class="ic"><use href="#i-blk-b"/></svg><svg class="ic"><use href="#i-blk-c"/></svg></div>
                    </div></div>
                    <div class="sec sec-4"><div class="strip"><svg class="ic ic-big"><use href="#i-dim"/></svg></div><div class="rows">
                        <div class="irow"><svg class="ic"><use href="#i-dim-a"/></svg><span class="vbar"></span><svg class="ic"><use href="#i-dim-b"/></svg><svg class="ic"><use href="#i-dim-c"/></svg><svg class="ic"><use href="#i-dim-d"/></svg><svg class="ic"><use href="#i-dim-e"/></svg><span class="vbar"></span><span class="fly"></span></div>
                        <div class="irow"><div class="combo combo-m"><span class="combo-text mono">STANDARD</span><span class="drop"><svg><use href="#i-tri-dn"/></svg></span></div><svg class="ic"><use href="#i-dim-st"/></svg></div>
                    </div></div>
                    <div class="sec sec-5"><div class="strip"><span class="big-a">A</span></div><div class="rows">
                        <div class="irow"><span class="txt-a">A</span><span class="txt-a">A<b>I</b></span><span class="vbar"></span><svg class="ic"><use href="#i-find"/></svg><svg class="ic"><use href="#i-abc"/></svg></div>
                        <div class="irow"><div class="combo combo-m"><span class="combo-text mono">Standard</span><span class="drop"><svg><use href="#i-tri-dn"/></svg></span></div><svg class="ic"><use href="#i-a-pen"/></svg></div>
                        <div class="irow"><div class="combo combo-l combo-on"><span class="combo-text"></span><span class="drop"><svg><use href="#i-tri-dn"/></svg></span></div></div>
                    </div></div>
                    <div class="sec sec-6"><div class="strip"><svg class="ic ic-big"><use href="#i-lead"/></svg></div><div class="rows">
                        <div class="irow"><svg class="ic"><use href="#i-ml"/></svg><span class="vbar"></span><svg class="ic"><use href="#i-ml-add"/></svg><svg class="ic"><use href="#i-ml-del"/></svg><span class="vbar"></span><svg class="ic"><use href="#i-ml-align"/></svg><svg class="ic"><use href="#i-ml-coll"/></svg></div>
                        <div class="irow"><div class="combo combo-m"><span class="combo-text mono">Standard</span><span class="drop"><svg><use href="#i-tri-dn"/></svg></span></div><svg class="ic"><use href="#i-ml-st"/></svg></div>
                    </div></div>
                    <div class="sec sec-7"><div class="strip"><svg class="ic ic-big"><use href="#i-tbl-big"/></svg></div><div class="rows">
                        <div class="irow"><svg class="ic"><use href="#i-tbl"/></svg><span class="vbar"></span><svg class="ic"><use href="#i-tbl-sync"/></svg><svg class="ic"><use href="#i-tbl-ed"/></svg></div>
                        <div class="irow"><div class="combo combo-m"><span class="combo-text mono left">Standard</span><span class="drop"><svg><use href="#i-tri-dn"/></svg></span></div><svg class="ic"><use href="#i-tbl-st"/></svg></div>
                    </div></div>
                    <div class="sec sec-8"><div class="strip"><svg class="ic ic-big"><use href="#i-compass"/></svg></div><div class="rows">
                        <div class="irow"><svg class="ic"><use href="#i-pan"/></svg><svg class="ic"><use href="#i-zrt"/></svg><span class="vbar"></span><svg class="ic"><use href="#i-zw"/></svg><svg class="ic"><use href="#i-ze"/></svg></div>
                    </div></div>
                </aside>
            </div>
            <div class="statusbar">
                <span class="st-scale">比例 1:100 ▾</span>
                <span class="st-coord">37393, 42199, 0</span>
                <span class="st w22">捕捉</span><span class="st w22">栅格</span><span class="st w22">正交</span><span class="st w22 down">极轴</span><span class="st w44 down">对象捕捉</span><span class="st w42">对象追踪</span><span class="st w24 small"></span><span class="st w18 small"></span><span class="st w22">线宽</span><span class="st w22">模型</span>
                <span class="st-ann">注释比例: 1:1 ▾</span>
                <svg class="ic"><use href="#i-lock"/></svg><svg class="ic"><use href="#i-sun"/></svg>
                <svg class="ic st-tray"><use href="#i-tray"/></svg>
            </div>
        </div>

        <div class="dialog">
            <div class="dlg-title">
                <svg class="ic"><use href="#i-app"/></svg><span class="dlg-name">绘制轴网</span>
                <span class="wb wb-q">?</span><span class="wb wb-q">×</span>
            </div>
            <div class="dlg-tabs"><span class="dtab">直线轴网</span><span class="dtab dtab-on">圆弧轴网</span></div>
            <div class="group">
                <div class="group-top">
                    <div class="preview">
                        <svg viewBox="0 0 184 168">
                            <g class="pv-red"><path d="M63 90 129 25M77 110 160 71M83 127 173 111M84 139H176"/></g>
                            <path class="pv-white" d="M20 138 43 126 63 114 100 82"/>
                            <path class="pv-white" d="M71 64C78 63 84 63 88 65 93 70 97 76 100 79 105 84 108 90 110 94 113 102 114 108 115 124V143"/>
                            <path class="pv-green" d="M88 66C96 74 109 94 114 119"/>
                            <path class="pv-star" d="M10 138H20M15 133V143M11.500 134.500 18.500 141.500M18.500 134.500 11.500 141.500"/>
                        </svg>
                    </div>
                    <div class="radios">
                        <label class="radio on"><i></i>圆心角</label>
                        <label class="radio"><i></i>进<b></b>深</label>
                        <label class="radio radio-gap on"><i></i>逆时针</label>
                        <label class="radio"><i></i>顺时针</label>
                    </div>
                    <div class="grid">
                        <div class="g-row g-head"><span class="g-sel"></span><span>轴夹角</span><span>个数</span></div>
                        <div class="g-row"><span class="g-sel"></span><span>10</span><span>1</span></div>
                        <div class="g-row"><span class="g-sel"></span><span>15</span><span>1</span></div>
                        <div class="g-row"><span class="g-sel"><svg><use href="#i-tri-rt"/></svg></span><span>20</span><span>1</span></div>
                        <div class="g-row"><span class="g-sel"><svg><use href="#i-tri-dn"/></svg></span><span></span><span></span></div>
                    </div>
                    <ul class="values">
                        <li>10</li><li>15</li><li>20</li><li>25</li><li>30</li><li>35</li><li>40</li><li>45</li><li>60</li><li>90</li><li>120</li><li>150</li>
                    </ul>
                </div>
                <div class="group-row">
                    <span class="btn b60">共用轴线&lt;</span>
                    <span class="btn b61 mlb">插入点</span>
                    <span class="lbl l-start">起始角:</span>
                    <span class="input i-start">0</span>
                    <span class="spin"><span class="sb"><svg><use href="#i-tri-up"/></svg></span><span class="sb"><svg><use href="#i-tri-dn"/></svg></span></span>
                    <span class="btn b60 ml8">内弧半径&lt;</span>
                    <span class="input i-rad">3300</span>
                </div>
                <div class="group-row row-key">
                    <span class="lbl key-lbl">键入:</span>
                    <span class="input i-key">10 15 20</span>
                    <span class="btn b51">清&nbsp;&nbsp;&nbsp;空</span>
                </div>
            </div>
            <div class="dlg-foot">
                <span class="lbl tot">总夹角: <em>45</em></span>
                <span class="lbl tot">总进深: <em>0</em></span>
                <span class="btn b60 f1">恢复上次</span>
                <span class="btn b60 f2"><span class="focus">确定</span></span>
                <span class="btn b60 f3">取消</span>
            </div>
            <svg class="marks" viewBox="0 0 412 306">
                <circle class="mark-y" cx="321" cy="194" r="13"/>
                <path class="mark-pen" d="M320 194l2-8 5-6 3 2-4 7z"/>
                <path class="mark-r" d="M281 222C284 214 291 212 301 212 315 206 335 208 351 208 364 209 378 221 378 229 376 239 362 243 347 245 330 248 316 248 304 248 296 245 286 236 282 226Z"/>
            </svg>
        </div>

        <div class="play"><span class="play-tri"></span></div>
    </section>
    <div class="watermark">www.bdocx.com</div>
</main>
</body>
</html>
```

FILE: styles.css
```css
body {
    margin: 0;
    background: #fff;
    font-family: "Noto Sans CJK SC", "Liberation Sans", sans-serif;
    font-size: 10px;
    color: #1c1c1c;
}
.sprite {
    display: none;
}
.page {
    position: relative;
    min-height: 1193px;
    padding: 109px 0 0 146px;
}
i {
    font-style: normal;
}

/* video frames */
.shot {
    position: relative;
    overflow: hidden;
    background: #000;
}
.shot-a {
    width: 642px;
    height: 459px;
    box-sizing: border-box;
    border-bottom: 3px solid #3a3a3a;
    background: #cfe4f8;
    border-top: 1px solid #000;
}
.shot-b {
    width: 644px;
    height: 461px;
    padding-top: 12px;
    box-sizing: border-box;
    background: linear-gradient(#000 12px, #2f6ca6 12px);
}
.caption {
    margin: 0;
    height: 52px;
    line-height: 52px;
    font-family: "Liberation Serif", "Noto Sans CJK SC", serif;
    font-size: 16px;
    color: #111;
}
.window {
    width: 633px;
    height: 455px;
    background: #d4d0c8;
    border-right: 1px solid #77756f;
    box-sizing: border-box;
    overflow: hidden;
    filter: blur(0.35px);
}
.shot-b .window {
    margin-left: -3px;
    height: 449px;
}
.ic {
    width: 16px;
    height: 16px;
    flex: none;
    display: block;
}

/* title + menu */
.titlebar {
    display: flex;
    height: 19px;
    background: linear-gradient(90deg, #0a246a 0, #a6caf0 100%);
}
.shot-b .titlebar {
    background: #bab8b1;
}
.app-title {
    width: 84px;
    display: flex;
    align-items: center;
    gap: 2px;
    color: #fff;
    font: 700 9.5px "Liberation Sans", sans-serif;
    white-space: nowrap;
    overflow: hidden;
    background: #0a246a;
    padding-left: 2px;
    box-sizing: border-box;
}
.shot-b .app-title {
    background: #84827e;
    color: #d8d8d4;
}
.banner {
    width: 480px;
    height: 17px;
    padding-left: 7px;
    box-sizing: border-box;
    background: #000;
    color: #38d04a;
    font-size: 12px;
    line-height: 17px;
    letter-spacing: 0.9px;
    white-space: nowrap;
    overflow: hidden;
}
.banner i {
    font: 12px "Liberation Mono", monospace;
    letter-spacing: -0.8px;
}
.shot-b .banner {
    height: 15px;
    line-height: 15px;
    margin-left: -2px;
    width: 484px;
}
.titlebar .win-btns {
    padding-top: 3px;
}
.win-btns {
    margin-left: auto;
    margin-right: 3px;
    display: flex;
    gap: 1px;
}
.wb {
    width: 13px;
    height: 12px;
    background: #d4d0c8;
    border: 1px solid;
    border-color: #fff #555 #555 #fff;
    box-sizing: border-box;
    font: 700 10px/10px "Liberation Sans", sans-serif;
    text-align: center;
    color: #111;
}
.menubar {
    height: 18px;
    display: flex;
    align-items: center;
}
.menu-ic {
    margin: 0 3px 0 4px;
}
.menu {
    width: 41.3px;
    flex: none;
    line-height: 18px;
    white-space: nowrap;
}
.menu u {
    font-size: 9px;
}
.shot-b .menu {
    color: #77756f;
}

/* toolbar */
.toolbar {
    width: 592px;
    height: 20px;
    display: flex;
    align-items: center;
    gap: 2.6px;
    border-bottom: 1px solid #a8a6a0;
    box-sizing: border-box;
}
.grip {
    flex: none;
    width: 3px;
    height: 16px;
    margin-left: 5px;
    border-left: 1px solid #fff;
    border-right: 1px solid #888;
    background: #eeece6;
}
.grip-mid {
    margin: 0 4px 0 5px;
}
.combo {
    flex: none;
    height: 16px;
    display: flex;
    align-items: center;
    background: #fff;
    border: 1px solid;
    border-color: #666 #ddd #ddd #666;
    box-sizing: border-box;
}
.combo-work {
    width: 141px;
    margin-left: 3px;
}
.shot-b .combo-work {
    background: #d4d0c8;
    color: #77756f;
}
.combo-text {
    flex: 1;
    padding-left: 5px;
    white-space: nowrap;
    overflow: hidden;
}
.combo-m .combo-text {
    padding-left: 0;
}
.combo-text.mono {
    font: 10px "Liberation Mono", monospace;
    text-align: center;
}
.combo-text.mono.left {
    text-align: left;
    padding-left: 3px;
}
.drop {
    flex: none;
    width: 13px;
    height: 14px;
    background: #d4d0c8;
    border: 1px solid;
    border-color: #fff #666 #666 #fff;
    box-sizing: border-box;
    display: flex;
    align-items: center;
    justify-content: center;
}
.drop svg, .sb svg, .mini svg, .nav svg {
    width: 8px;
    height: 8px;
}
.sep {
    flex: none;
    width: 1px;
    height: 16px;
    background: #aaa8a2;
    margin: 0 1px;
}
.mini {
    width: 5px;
    height: 8px;
    flex: none;
}
.mini svg {
    display: block;
    width: 5px;
    height: 7px;
}
.mini.off {
    opacity: .3;
}
.help {
    width: 16px;
    height: 16px;
    background: #2c6db2;
    border: 1px solid #17406f;
    border-radius: 2px;
    box-sizing: border-box;
    color: #fff;
    font: 700 12px/14px "Liberation Sans", sans-serif;
    text-align: center;
}

/* work area */
.workarea {
    display: flex;
    height: 385px;
}
.left-panel {
    width: 66px;
    flex: none;
    border-right: 1px solid #999;
    box-sizing: border-box;
    overflow: hidden;
}
.shot-b .left-panel {
    width: 65px;
}
.pal-head {
    display: flex;
    align-items: center;
    gap: 2px;
    height: 10px;
    margin: 5px 2px 1px 3px;
}
.pal-head-r {
    margin: 5px 7px 2px 7px;
}
.pal-min {
    width: 7px;
    height: 7px;
    border: 1px solid #777;
    box-sizing: border-box;
    background: linear-gradient(#eee 3px, #222 3px, #222 4px, #eee 4px);
    flex: none;
}
.pal-line {
    flex: 1;
    height: 4px;
    border: 1px solid #aaa;
    border-left-color: #fff;
    border-top-color: #fff;
    box-sizing: border-box;
}
.pal-x {
    width: 9px;
    height: 9px;
    flex: none;
    border: 1px solid #888;
    box-sizing: border-box;
    font: 700 8px/7px "Liberation Sans", sans-serif;
    text-align: center;
}
.arr {
    width: 8px;
    height: 8px;
    flex: none;
    color: #3a6ea8;
}
.tool-head {
    height: 14px;
    display: flex;
    align-items: center;
    gap: 6px;
    padding-left: 7px;
    border-bottom: 2px solid #8f8d87;
    box-sizing: content-box;
}
.tool-group {
    margin-top: 2px;
    padding-bottom: 2px;
    background: #ebe9e3;
    border-bottom: 1px solid #b0aea8;
}
.tool-group + .tool-group {
    margin-top: 0;
    border-top: 1px solid #fff;
}
.tool-group + .tool-group + .tool-group {
    margin-top: 1px;
}
.tool {
    height: 14.7px;
    display: flex;
    align-items: center;
    gap: 4px;
    padding-left: 4px;
    white-space: nowrap;
}
.shot-b .tool, .shot-b .cat {
    padding-left: 3px;
}
.tool .ic {
    width: 14px;
    height: 14px;
}
.tool span, .cat span {
    width: 40px;
    flex: none;
    white-space: nowrap;
    text-align-last: justify;
}
.cats {
    margin-top: 1px;
}
.cat {
    height: 14.6px;
    display: flex;
    align-items: center;
    gap: 10px;
    padding-left: 5px;
}
.cat .arr {
    width: 7px;
    height: 9px;
}

.center {
    flex: 1;
    min-width: 0;
    display: flex;
    flex-direction: column;
}
.canvas {
    height: 312px;
    margin: 1px 7px 0 1px;
    background: #000;
    overflow: hidden;
}
.drawing {
    display: block;
    width: 411px;
    height: 312px;
}
.reds path {
    stroke: #cc2a20;
    stroke-width: 1.1;
    fill: none;
}
.cross path, .cross rect {
    stroke: #dfe2a6;
    fill: none;
}
.ucs rect, .ucs path {
    stroke: #d8d8d8;
    fill: none;
}
.ucs text {
    fill: #d8d8d8;
    font: 10px "Liberation Sans", sans-serif;
}
.tabs {
    height: 17px;
    margin-right: 7px;
    display: flex;
    align-items: center;
    padding-left: 3px;
    border-bottom: 2px solid #8f8d87;
    box-sizing: border-box;
    background: #d4d0c8;
}
.nav {
    width: 11px;
    height: 12px;
    flex: none;
    display: flex;
    align-items: center;
    justify-content: center;
}
.nav svg {
    opacity: .4;
}
.tab {
    height: 15px;
    padding: 0 3px 0 6px;
    transform: skewX(-18deg);
    border-right: 1px solid #555;
    border-bottom: 1px solid #555;
    margin-left: 1px;
    line-height: 14px;
    box-sizing: border-box;
    white-space: nowrap;
}
.tab span {
    display: block;
    transform: skewX(18deg);
}
.tab-on {
    margin-left: 3px;
    padding: 0 6px;
    background: #000;
    color: #fff;
    transform: none;
    clip-path: polygon(0 0, 100% 0, 88% 100%, 14% 100%);
}
.tab-on span {
    transform: none;
}
.splitter {
    height: 6px;
    border-bottom: 1px solid #fff;
    box-sizing: border-box;
}
.command {
    flex: 1;
    display: flex;
    padding: 4px 5px 1px 8px;
    gap: 2px;
}
.grip-cmd {
    height: auto;
    margin: 0;
    width: 4px;
}
.cmd-box {
    flex: 1;
    display: flex;
    flex-direction: column;
    border: 1px solid;
    border-color: #666 #ddd #ddd #666;
    background: #d4d0c8;
    box-sizing: border-box;
}
.cmd-log {
    height: 26px;
    display: flex;
    border-bottom: 1px solid #808080;
    background: #fff;
}
.cmd-text {
    flex: 1;
    font: 10.9px/13px "Liberation Mono", monospace;
    white-space: nowrap;
    overflow: hidden;
    padding-left: 2px;
}
.cmd-text div {
    height: 13px;
    position: relative;
    top: -1px;
}
.cn-big {
    font-family: "Noto Sans CJK SC", sans-serif;
    font-size: 13px;
    line-height: 13px;
    font-weight: 300;
    color: #333;
}
.vscroll {
    width: 14px;
    flex: none;
}
.sb {
    width: 13px;
    height: 13px;
    background: #d4d0c8;
    border: 1px solid;
    border-color: #fff #555 #555 #fff;
    box-sizing: border-box;
    display: flex;
    align-items: center;
    justify-content: center;
    flex: none;
}
.cmd-input {
    flex: 1;
    display: flex;
}
.cmd-line {
    width: 330px;
    background: #fff;
    padding-left: 2px;
    height: 16px;
    line-height: 14px;
    overflow: hidden;
}
.hscroll {
    display: flex;
    width: 48px;
    height: 15px;
}
.thumb {
    width: 13px;
    background: #d4d0c8;
    border: 1px solid;
    border-color: #fff #888 #888 #fff;
    box-sizing: border-box;
}
.track {
    flex: 1;
    background: repeating-conic-gradient(#fff 0 25%, #d4d0c8 0 50%) 0 0 / 2px 2px;
}

/* right palette */
.right-panel {
    width: 146px;
    flex: none;
    border-left: 1px solid #8f8d87;
    box-sizing: border-box;
}
.sec {
    display: flex;
    border-top: 1px solid #c4c2bc;
    box-sizing: border-box;
    background: #e8e6e0;
    margin-left: 1px;
    margin-right: 1px;
}
.strip {
    width: 19px;
    flex: none;
    background: #d9d7d1;
    display: flex;
    justify-content: center;
    padding-top: 3px;
}
.ic-big {
    width: 17px;
    height: 17px;
    margin-left: 1px;
}
.rows {
    flex: 1;
    display: flex;
    flex-direction: column;
    padding-right: 5px;
}
.irow {
    display: flex;
    justify-content: flex-end;
    align-items: center;
    gap: 2px;
    height: 16px;
    flex: none;
}
.sec-1 { height: 66px; }
.sec-1 .rows { padding-top: 4px; gap: 5px; }
.sec-1 .irow + .irow + .irow { margin-top: -1px; }
.sec-2 { height: 47px; }
.sec-2 .rows { padding-top: 4px; gap: 5px; }
.sec-3 { height: 26px; }
.sec-3 .rows { padding-top: 4px; padding-right: 7px; }
.sec-4 { height: 46px; }
.sec-4 .rows { padding-top: 3px; gap: 5px; }
.sec-5 { height: 67px; }
.sec-5 .rows { padding-top: 2px; gap: 5px; }
.sec-5 .irow:nth-child(2) { margin-top: 1px; }
.sec-6 { height: 46px; }
.sec-6 .rows { padding-top: 2px; gap: 6px; }
.sec-7 { height: 46px; }
.sec-7 .rows { padding-top: 3px; gap: 5px; }
.sec-8 { height: 24px; }
.sec-8 .rows { padding-top: 4px; }
.combo-m {
    width: 75px;
}
.combo-l {
    width: 93px;
}
.layer-ics {
    flex: 1;
    display: flex;
    align-items: center;
    padding-left: 2px;
    font: 10px "Liberation Sans", sans-serif;
    color: #444;
    gap: 1px;
}
.layer-ics .ic {
    width: 13px;
    height: 13px;
}
.swatch {
    width: 8px;
    height: 8px;
    border: 1px solid #222;
    margin: 0 3px 0 1px;
}
.fly {
    width: 5px;
    height: 10px;
    margin-top: 6px;
    flex: none;
    background: linear-gradient(#222, #222) 0 100% / 5px 1px no-repeat, linear-gradient(#222, #222) 0 70% / 5px 1px no-repeat;
}
.vbar {
    width: 1px;
    height: 16px;
    background: #444;
    flex: none;
}
.big-a {
    font: 22px/22px "Liberation Sans", sans-serif;
    color: #5a86b8;
}
.txt-a {
    font: 16px/16px "Liberation Sans", sans-serif;
    color: #1c1c1c;
    margin-right: 3px;
}
.txt-a b {
    font-weight: 400;
    color: #6a7f98;
}
.is-off .combo {
    background: #d4d0c8;
    color: #8a8880;
}
.is-off .combo-on {
    background: #e8e6e0;
    color: #1c1c1c;
}

/* status bar */
.statusbar {
    height: 20px;
    display: flex;
    align-items: flex-start;
    gap: 2px;
    padding-top: 4px;
    box-sizing: border-box;
    border-top: 1px solid #fff;
    white-space: nowrap;
}
.st-scale {
    width: 70px;
    padding-left: 5px;
    box-sizing: border-box;
    flex: none;
}
.st-coord {
    width: 112px;
    flex: none;
    height: 16px;
    border: 1px solid #888;
    box-sizing: border-box;
    padding-left: 2px;
    color: #333;
    font: 9px "Liberation Mono", monospace;
    margin-right: 2px;
}
.st {
    flex: none;
    height: 16px;
    text-align: center;
    border: 1px solid;
    border-color: #fff #666 #666 #fff;
    box-sizing: border-box;
    font-size: 9.500px;
    line-height: 14px;
    overflow: hidden;
}
.st.down {
    border-color: #444 #eee #eee #444;
}
.st.small {
    font: 7px/14px "Liberation Mono", monospace;
}
.w22 { width: 22px; }
.w18 { width: 18px; }
.w24 { width: 24px; }
.w42 { width: 42px; }
.w44 { width: 44px; }
.st-ann {
    width: 60px;
    margin-left: 9px;
    flex: none;
    overflow: hidden;
}
.st-tray {
    margin-left: 18px;
}

/* play badge */
.play {
    position: absolute;
    left: 16px;
    top: 368px;
    width: 48px;
    height: 49px;
    border-radius: 4px;
    background: linear-gradient(#3a3a3a, #0c0c0c);
    display: flex;
    align-items: center;
    justify-content: center;
}
.shot-b .play {
    left: 12px;
    top: 380px;
}
.play-tri {
    width: 0;
    height: 0;
    margin-left: 2px;
    border-left: 20px solid #e4e4e4;
    border-top: 13px solid transparent;
    border-bottom: 13px solid transparent;
    filter: blur(.8px);
}

/* dialog */
.dialog {
    position: absolute;
    left: 136px;
    top: 63px;
    width: 412px;
    height: 306px;
    background: #d4d0c8;
    border: 1px solid;
    border-color: #eee #555 #555 #eee;
    box-sizing: border-box;
    filter: blur(0.35px);
}
.dlg-title {
    height: 15px;
    display: flex;
    align-items: center;
    gap: 2px;
    padding: 0 3px 0 2px;
    background: linear-gradient(90deg, #0a246a, #a6caf0);
}
.dlg-title .ic {
    width: 13px;
    height: 13px;
}
.dlg-name {
    flex: 1;
    color: #fff;
    font-weight: 700;
}
.wb-q {
    width: 14px;
    height: 13px;
}
.dlg-tabs {
    height: 23px;
    display: flex;
    align-items: flex-end;
    padding-left: 9px;
    gap: 2px;
}
.dtab {
    height: 15px;
    padding: 0 3px;
    line-height: 14px;
    border: 1px solid;
    border-color: #fff #666 transparent #fff;
    box-sizing: border-box;
    border-radius: 2px 2px 0 0;
}
.dtab-on {
    height: 17px;
    padding: 0 6px;
    line-height: 15px;
    position: relative;
    top: 1px;
    background: #d4d0c8;
    z-index: 1;
}
.group {
    margin-left: 8px;
    width: 393px;
    height: 235px;
    border: 1px solid;
    border-color: #fff #666 #666 #fff;
    box-sizing: border-box;
    padding: 8px 6px 0 11px;
}
.group-top {
    display: flex;
    height: 169px;
}
.preview {
    width: 184px;
    height: 168px;
    background: #000;
    flex: none;
}
.preview svg {
    display: block;
    width: 184px;
    height: 168px;
}
.pv-red path {
    stroke: #8c1e1e;
    fill: none;
}
.pv-white {
    stroke: #fff;
    stroke-width: 1.4;
    fill: none;
}
.pv-green {
    stroke: #2a8a3a;
    fill: none;
}
.pv-star {
    stroke: #3ccf5a;
    fill: none;
}
.radios {
    width: 46px;
    flex: none;
    padding: 24px 0 0 2px;
    box-sizing: border-box;
    overflow: hidden;
}
.radio {
    height: 19px;
    display: flex;
    align-items: center;
    gap: 4px;
    white-space: nowrap;
}
.radio i {
    width: 8px;
    height: 8px;
    flex: none;
    border-radius: 50%;
    background: #fff;
    border: 1px solid #777;
}
.radio.on i {
    background: radial-gradient(#111 0 2px, #fff 2.500px);
}
.radio b {
    width: 8px;
}
.radio-gap {
    margin-top: 15px;
    margin-bottom: 1px;
}
.grid {
    width: 103px;
    height: 168px;
    flex: none;
    background: linear-gradient(90deg, #d4d0c8 14px, #fff 14px);
    border: 1px solid #555;
    box-sizing: border-box;
}
.g-row {
    display: grid;
    grid-template-columns: 13px 47px 41px;
    height: 13px;
    line-height: 12px;
    font-family: "Noto Sans CJK SC", sans-serif;
}
.g-row span {
    border-right: 1px solid #9a9a9a;
    border-bottom: 1px solid #9a9a9a;
    padding-left: 1px;
    overflow: hidden;
}
.g-head span {
    background: #d4d0c8;
    border-color: #555;
}
.g-row .g-sel {
    background: #d4d0c8;
    border-color: #777;
    padding: 0;
    display: flex;
    align-items: center;
    justify-content: center;
}
.g-sel svg {
    width: 7px;
    height: 7px;
}
.values {
    width: 38px;
    height: 168px;
    flex: none;
    margin: 0 0 0 3px;
    padding: 1px 0 0 2px;
    box-sizing: border-box;
    list-style: none;
    background: #fff;
    border: 1px solid;
    border-color: #666 #ddd #ddd #666;
    font: 10px/9.7px "Liberation Sans", sans-serif;
    color: #222;
}
.group-row {
    display: flex;
    align-items: center;
    margin-top: 7px;
    height: 16px;
}
.row-key {
    margin-top: 8px;
    padding-left: 5px;
}
.btn {
    flex: none;
    height: 16px;
    line-height: 14px;
    text-align: center;
    background: #d4d0c8;
    border: 1px solid;
    border-color: #fff #555 #555 #fff;
    box-sizing: border-box;
}
.b60 { width: 60px; }
.b61 { width: 61px; }
.b51 { width: 51px; }
.mlb { margin-left: 15px; }
.ml8 { margin-left: 8px; }
.lbl {
    flex: none;
    white-space: nowrap;
}
.key-lbl {
    width: 30px;
}
.l-start {
    margin-left: 16px;
    width: 40px;
}
.input {
    flex: none;
    height: 16px;
    background: #fff;
    border: 1px solid;
    border-color: #666 #ddd #ddd #666;
    box-sizing: border-box;
    padding-left: 1px;
    line-height: 13px;
    font-family: "Liberation Sans", sans-serif;
}
.i-start { width: 45px; }
.i-rad { width: 50px; margin-left: 3px; }
.i-key { width: 285px; margin: 0 4px 0 0; }
.spin {
    width: 14px;
    height: 16px;
    flex: none;
    margin-left: 1px;
    display: flex;
    flex-direction: column;
}
.spin .sb {
    height: 8px;
    width: 14px;
}
.spin svg {
    width: 6px;
    height: 6px;
}
.dlg-foot {
    display: flex;
    align-items: center;
    margin-top: 6px;
    padding-left: 12px;
}
.tot {
    width: 92px;
}
.tot em {
    font: 10px "Liberation Sans", sans-serif;
    color: #aaa8a2;
}
.f1 { margin-left: 4px; }
.f2 { margin-left: 13px; width: 61px; border: 2px solid #333; }
.f3 { margin-left: 6px; }
.focus {
    display: block;
    margin: 1px;
    border: 1px dotted #333;
    line-height: 8px;
}
.marks {
    position: absolute;
    left: 0;
    top: 0;
    width: 412px;
    height: 306px;
    overflow: visible;
}
.mark-y {
    fill: #f6e90a;
    filter: blur(.6px);
}
.mark-pen {
    fill: #fff;
    stroke: #111;
}
.mark-r {
    fill: none;
    stroke: #e2261e;
    stroke-width: 1.5;
}

.watermark {
    position: absolute;
    left: 253px;
    top: 593px;
    font: 58px/70px "Liberation Sans", sans-serif;
    color: rgba(150, 150, 150, .18);
    white-space: nowrap;
    filter: blur(.4px);
}
```
